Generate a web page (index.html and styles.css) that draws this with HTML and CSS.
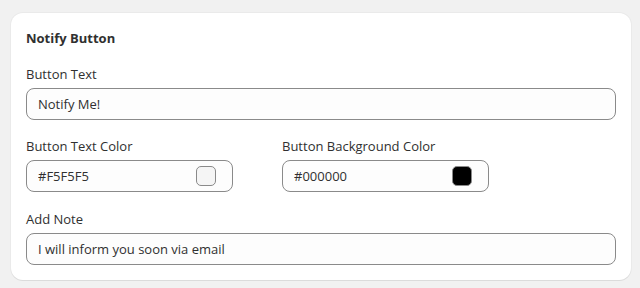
FILE: index.html
```html
<!DOCTYPE html>
<html lang="en">
<head>
  <meta charset="UTF-8" />
  <meta name="viewport" content="width=device-width, initial-scale=1.0"/>
  <title>Notify Button</title>
  <link rel="stylesheet" href="styles.css">
</head>
<body>

  <div class="card">
    <h2>Notify Button</h2>

    <div class="field">
      <label for="btnText">Button Text</label>
      <div class="input">
        <input type="text" id="btnText" value="Notify Me!">
      </div>
    </div>

    <div class="field-group">
      <div class="field">
        <label for="textColor">Button Text Color</label>
        <div class="input color-input">
          <input type="text" id="textColor" value="#F5F5F5">
          <span class="swatch" style="background: #F5F5F5"></span>
        </div>
      </div>
      <div class="field">
        <label for="bgColor">Button Background Color</label>
        <div class="input color-input">
          <input type="text" id="bgColor" value="#000000">
          <span class="swatch" style="background: #000000"></span>
        </div>
      </div>
    </div>

    <div class="field">
      <label for="note">Add Note</label>
      <div class="input">
        <input type="text" id="note" value="I will inform you soon via email">
      </div>
    </div>
  </div>

</body>
</html>
```

FILE: styles.css
```css
:root {
  --bg: #f1f1f1;
  --card: #ffffff;
  --text: #303030;
  --border: #8a8a8a;
  --input-bg: #fdfdfd;
  --radius: 12px;
}

* {
  box-sizing: border-box;
  margin: 0;
  padding: 0;
}

body {
  font-family: 'Open Sans', 'Noto Sans', sans-serif;
  font-size: 13px;
  line-height: 20px;
  background-color: var(--bg);
  color: var(--text);
  padding: 13px 9px 8px 11px;
}

.card {
  background: var(--card);
  border-radius: var(--radius);
  box-shadow: 0 1px 0 rgba(26, 26, 26, 0.07), 0 0 0 1px rgba(26, 26, 26, 0.03);
  padding: 15px;
  display: flex;
  flex-direction: column;
  gap: 16px;
}

h2 {
  font-size: 13px;
  font-weight: 700;
  line-height: 20px;
}

.field {
  display: flex;
  flex-direction: column;
  gap: 4px;
}

label {
  font-size: 13px;
}

.field-group {
  display: flex;
  gap: 49px;
  margin-bottom: 1px;
}

.field-group .field {
  width: 207px;
}

.input {
  height: 32px;
  border: 1px solid var(--border);
  border-radius: 8px;
  background: var(--input-bg);
  display: flex;
  align-items: center;
  padding: 0 11px;
}

.input input {
  flex: 1;
  min-width: 0;
  border: none;
  background: transparent;
  font: inherit;
  color: var(--text);
  outline: none;
}

.color-input {
  padding-right: 16px;
}

.swatch {
  width: 20px;
  height: 20px;
  border-radius: 5px;
  border: 1px solid var(--border);
  flex-shrink: 0;
}
```
